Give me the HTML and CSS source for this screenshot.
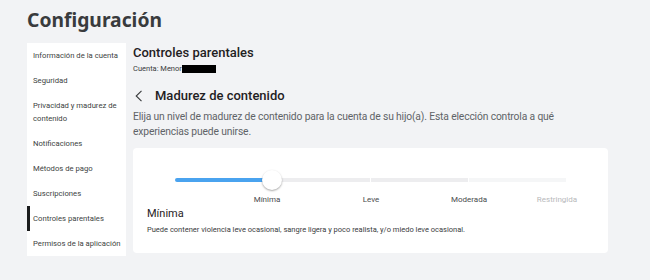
FILE: index.html
```html
<!DOCTYPE html>
<html lang="es">
<head>
<meta charset="utf-8">
<title>Configuración</title>
<link rel="stylesheet" href="styles.css">
</head>
<body>
<div class="page">
  <h1 class="title">Configuración</h1>
  <div class="layout">
    <nav class="sidebar">
      <a class="nav-item">Información de la cuenta</a>
      <a class="nav-item">Seguridad</a>
      <a class="nav-item">Privacidad y madurez de contenido</a>
      <a class="nav-item">Notificaciones</a>
      <a class="nav-item">Métodos de pago</a>
      <a class="nav-item">Suscripciones</a>
      <a class="nav-item active">Controles parentales</a>
      <a class="nav-item">Permisos de la aplicación</a>
    </nav>
    <main class="main">
      <h2 class="section-title">Controles parentales</h2>
      <div class="account">Cuenta: Menor<span class="redact"></span></div>
      <div class="sub-header">
        <svg class="chev" width="8" height="12" viewBox="0 0 8 12"><path d="M6.5 0.8 L1.2 6 L6.5 11.2" fill="none" stroke="#393b3d" stroke-width="1.1"/></svg>
        <h3 class="sub-title">Madurez de contenido</h3>
      </div>
      <p class="desc">Elija un nivel de madurez de contenido para la cuenta de su hijo(a). Esta elección controla a qué experiencias puede unirse.</p>
      <section class="card">
        <div class="slider">
          <div class="track">
            <div class="seg seg-fill"></div>
            <div class="seg"></div>
            <div class="seg"></div>
            <div class="seg seg-light"></div>
          </div>
          <div class="thumb"></div>
        </div>
        <div class="labels">
          <span class="lbl lbl-first">Mínima</span>
          <span class="lbl">Leve</span>
          <span class="lbl">Moderada</span>
          <span class="lbl lbl-last">Restringida</span>
        </div>
        <div class="level-name">Mínima</div>
        <div class="level-desc">Puede contener violencia leve ocasional, sangre ligera y poco realista, y/o miedo leve ocasional.</div>
      </section>
    </main>
  </div>
</div>
</body>
</html>
```
FILE: styles.css
```css
* { box-sizing: border-box; }
html, body { margin: 0; padding: 0; }
body {
  background: #f2f3f5;
  font-family: Roboto, "Noto Sans", sans-serif;
  color: #393b3d;
  width: 650px;
  height: 280px;
  overflow: hidden;
}
.page { padding: 6px 0 0 27px; }
.title {
  margin: 0;
  font-family: "Noto Sans", sans-serif;
  font-size: 19.3px;
  font-weight: 700;
  line-height: 28px;
  color: #393b3d;
}
.layout {
  display: flex;
  gap: 7px;
  margin-top: 9px;
  align-items: flex-start;
}
.sidebar {
  width: 99px;
  background: #fff;
  display: flex;
  flex-direction: column;
}
.nav-item {
  display: block;
  padding: 6px 0 6px 3px;
  font-size: 7.7px;
  line-height: 13px;
  color: #3d3f42;
  border-left: 3px solid transparent;
}
.nav-item.active { border-left-color: #1b1c1d; }
.main { width: 475px; padding-top: 2px; }
.section-title {
  margin: 0;
  font-size: 13px;
  font-weight: 500;
  line-height: 16px;
  color: #1f2123;
}
.account {
  display: flex;
  align-items: center;
  font-size: 7.5px;
  line-height: 10px;
  margin-top: 3px;
  color: #393b3d;
}
.redact {
  display: inline-block;
  width: 34px;
  height: 8px;
  background: #000;
}
.sub-header {
  display: flex;
  align-items: center;
  margin-top: 14px;
  height: 16px;
}
.chev { margin-left: 2px; margin-right: 12px; }
.sub-title {
  margin: 0;
  font-size: 13px;
  font-weight: 500;
  line-height: 16px;
  color: #1f2123;
}
.desc {
  margin: 5px 0 0;
  font-size: 10.3px;
  letter-spacing: -0.15px;
  line-height: 15px;
  color: #606367;
}
.card {
  margin-top: 9px;
  background: #fff;
  border-radius: 4px;
  height: 105px;
  padding: 22px 14px 0;
}
.slider {
  position: relative;
  margin: 0 28px;
  height: 20px;
}
.track {
  display: flex;
  gap: 1px;
  padding-top: 8px;
}
.seg {
  flex: 1;
  height: 4px;
  background: #ededef;
}
.seg-fill { background: #4aa3ef; border-radius: 2px 0 0 2px; }
.seg-light { background: #f5f6f7; }
.thumb {
  position: absolute;
  left: 87px;
  top: 0;
  width: 20px;
  height: 20px;
  border-radius: 50%;
  background: #fff;
  box-shadow: 0 1px 2px rgba(0,0,0,0.35);
}
.labels {
  display: flex;
  margin: 4px 0 0 77px;
}
.lbl {
  flex: 0 0 98px;
  text-align: center;
  font-size: 8px;
  line-height: 12px;
  color: #494b4e;
}
.lbl-first { padding-right: 12px; }
.lbl-last { padding-right: 20px; color: #b8b9bb; }
.level-name {
  margin-top: 1px;
  font-size: 11px;
  line-height: 14px;
  color: #1f2123;
}
.level-desc {
  margin-top: 3px;
  font-size: 7.5px;
  line-height: 11px;
  color: #393b3d;
}
```
